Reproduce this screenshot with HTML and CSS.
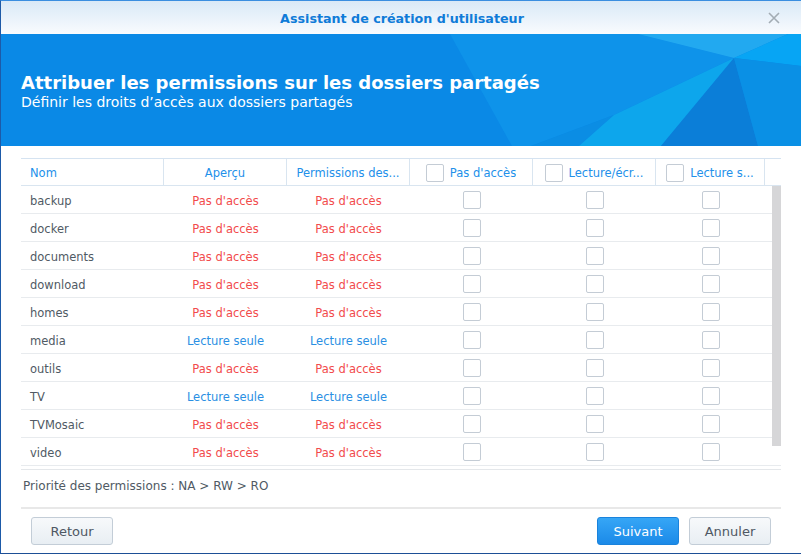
FILE: index.html
```html
<!DOCTYPE html>
<html lang="fr">
<head>
<meta charset="utf-8">
<title>Assistant de création d'utilisateur</title>
<link rel="stylesheet" href="styles.css">
</head>
<body>
<div class="window">
  <div class="titlebar">
    <span class="title">Assistant de création d'utilisateur</span>
    <span class="close" aria-label="Fermer">
      <svg width="12" height="12" viewBox="0 0 12 12"><path d="M1 1L11 11M11 1L1 11" stroke="#a3acb4" stroke-width="1.6" fill="none"/></svg>
    </span>
  </div>
  <div class="banner">
    <svg class="facets" viewBox="0 0 801 112" preserveAspectRatio="none">
      <polygon points="449,0 637,0 733,24 613,81 530,112 511,112" fill="#0e93ea"/>
      <polygon points="530,112 613,81 578,112" fill="#0b8de4"/>
      <polygon points="637,0 787,0 733,24" fill="#22a9f0"/>
      <polygon points="787,0 801,0 801,32 733,24" fill="#07a5f4"/>
      <polygon points="733,24 613,81 578,112 660,112" fill="#0da6ec"/>
      <polygon points="733,24 660,112 757,112" fill="#0b7ed8"/>
      <polygon points="733,24 801,32 801,112 757,112" fill="#0a90e5"/>
    </svg>
    <h1 class="banner-title">Attribuer les permissions sur les dossiers partagés</h1>
    <p class="banner-sub">Définir les droits d’accès aux dossiers partagés</p>
  </div>
  <div class="content">
    <div class="grid">
      <div class="ghead">
        <div class="hc c-name">Nom</div>
        <div class="hc c-mid center">Aperçu</div>
        <div class="hc c-mid center"><span class="ell">Permissions des...</span></div>
        <div class="hc c-mid center"><span class="cb"></span><span class="ell">Pas d'accès</span></div>
        <div class="hc c-mid center"><span class="cb"></span><span class="ell">Lecture/écr...</span></div>
        <div class="hc c-last center"><span class="cb"></span><span class="ell">Lecture s...</span></div>
        <div class="hc-spacer"></div>
      </div>
      <div class="gbody">
        <div class="row"><div class="c c-name">backup</div><div class="c c-mid na">Pas d'accès</div><div class="c c-mid na">Pas d'accès</div><div class="c c-mid"><span class="cb"></span></div><div class="c c-mid"><span class="cb"></span></div><div class="c c-last"><span class="cb"></span></div></div>
        <div class="row"><div class="c c-name">docker</div><div class="c c-mid na">Pas d'accès</div><div class="c c-mid na">Pas d'accès</div><div class="c c-mid"><span class="cb"></span></div><div class="c c-mid"><span class="cb"></span></div><div class="c c-last"><span class="cb"></span></div></div>
        <div class="row"><div class="c c-name">documents</div><div class="c c-mid na">Pas d'accès</div><div class="c c-mid na">Pas d'accès</div><div class="c c-mid"><span class="cb"></span></div><div class="c c-mid"><span class="cb"></span></div><div class="c c-last"><span class="cb"></span></div></div>
        <div class="row"><div class="c c-name">download</div><div class="c c-mid na">Pas d'accès</div><div class="c c-mid na">Pas d'accès</div><div class="c c-mid"><span class="cb"></span></div><div class="c c-mid"><span class="cb"></span></div><div class="c c-last"><span class="cb"></span></div></div>
        <div class="row"><div class="c c-name">homes</div><div class="c c-mid na">Pas d'accès</div><div class="c c-mid na">Pas d'accès</div><div class="c c-mid"><span class="cb"></span></div><div class="c c-mid"><span class="cb"></span></div><div class="c c-last"><span class="cb"></span></div></div>
        <div class="row"><div class="c c-name">media</div><div class="c c-mid ro">Lecture seule</div><div class="c c-mid ro">Lecture seule</div><div class="c c-mid"><span class="cb"></span></div><div class="c c-mid"><span class="cb"></span></div><div class="c c-last"><span class="cb"></span></div></div>
        <div class="row"><div class="c c-name">outils</div><div class="c c-mid na">Pas d'accès</div><div class="c c-mid na">Pas d'accès</div><div class="c c-mid"><span class="cb"></span></div><div class="c c-mid"><span class="cb"></span></div><div class="c c-last"><span class="cb"></span></div></div>
        <div class="row"><div class="c c-name">TV</div><div class="c c-mid ro">Lecture seule</div><div class="c c-mid ro">Lecture seule</div><div class="c c-mid"><span class="cb"></span></div><div class="c c-mid"><span class="cb"></span></div><div class="c c-last"><span class="cb"></span></div></div>
        <div class="row"><div class="c c-name">TVMosaic</div><div class="c c-mid na">Pas d'accès</div><div class="c c-mid na">Pas d'accès</div><div class="c c-mid"><span class="cb"></span></div><div class="c c-mid"><span class="cb"></span></div><div class="c c-last"><span class="cb"></span></div></div>
        <div class="row"><div class="c c-name">video</div><div class="c c-mid na">Pas d'accès</div><div class="c c-mid na">Pas d'accès</div><div class="c c-mid"><span class="cb"></span></div><div class="c c-mid"><span class="cb"></span></div><div class="c c-last"><span class="cb"></span></div></div>
        <div class="scrollbar"></div>
      </div>
    </div>
    <div class="note">Priorité des permissions : NA &gt; RW &gt; RO</div>
  </div>
  <div class="footer">
    <button class="btn">Retour</button>
    <div class="footer-right">
      <button class="btn btn-primary">Suivant</button>
      <button class="btn">Annuler</button>
    </div>
  </div>
</div>
</body>
</html>
```
FILE: styles.css
```css
* { box-sizing: border-box; }
html, body { margin: 0; padding: 0; background: #ffffff; }
body {
  font-family: "DejaVu Sans", Verdana, sans-serif;
  font-size: 11.5px;
  color: #505a64;
}
.window {
  width: 801px;
  height: 554px;
  border-left: 1px solid #1d5aa8;
  border-top: 1px solid #3a8ee0;
  border-bottom: 1px solid #1d4f96;
  display: flex;
  flex-direction: column;
  background: #ffffff;
  overflow: hidden;
}
.titlebar {
  height: 33px;
  flex: none;
  background: linear-gradient(#d9e9f7, #f9fbfe);
  display: flex;
  align-items: center;
  justify-content: center;
  position: relative;
}
.title {
  font-weight: bold;
  font-size: 12.7px;
  color: #0f7bd8;
  margin-left: 2px;
  padding-top: 1px;
}
.close {
  position: absolute;
  right: 21px;
  top: 11px;
  width: 12px;
  height: 12px;
  display: block;
}
.close svg { display: block; }
.banner {
  position: relative;
  height: 112px;
  flex: none;
  background: #0a89e6;
  padding: 38px 20px 0 20px;
  color: #ffffff;
  overflow: hidden;
}
.facets {
  position: absolute;
  left: 0; top: 0;
  width: 801px;
  height: 112px;
}
.banner-title {
  position: relative;
  margin: 0;
  font-size: 18px;
  line-height: 21px;
  font-weight: bold;
}
.banner-sub {
  position: relative;
  margin: 1px 0 0 0;
  font-size: 14px;
  line-height: 16px;
}
.content {
  flex: none;
  padding: 12px 19px 0 20px;
}
.grid {
  width: 760px;
}
.ghead {
  display: flex;
  height: 28px;
  border-top: 1px solid #d5e3f1;
  border-bottom: 1px solid #d9e5f0;
  color: #2290ea;
}
.hc {
  display: flex;
  align-items: center;
  padding-top: 1px;
  border-right: 1px solid #d9e5f0;
  white-space: nowrap;
  overflow: hidden;
}
.hc .cb { margin-right: 6px; flex: none; }
.hc-spacer { flex: 1; }
.c-name { width: 143px; padding-left: 9px; }
.c-mid { width: 123px; }
.c-last { width: 109px; }
.center { justify-content: center; }
.ell { overflow: hidden; }
.gbody {
  position: relative;
  height: 284px;
  border-bottom: 1px solid #e4e7ea;
  overflow: hidden;
}
.row {
  display: flex;
  height: 28px;
  border-bottom: 1px solid #e8ebee;
}
.c {
  display: flex;
  align-items: center;
  justify-content: center;
  white-space: nowrap;
  padding-top: 2px;
}
.c.c-name { justify-content: flex-start; }
.na { color: #f24b4b; }
.ro { color: #2a8fe3; }
.cb {
  display: inline-block;
  width: 18px;
  height: 18px;
  border: 1px solid #c4ccd5;
  border-radius: 2px;
  background: #ffffff;
}
.c .cb { margin-top: -2px; }
.scrollbar {
  position: absolute;
  left: 751px;
  top: 0;
  width: 9px;
  height: 260px;
  background: #d6d6d8;
}
.note {
  height: 37px;
  padding: 8px 0 0 2px;
  line-height: 16px;
  font-size: 12px;
}
.footer {
  flex: none;
  margin: 0 20px 0 20px;
  border-top: 2px solid #e8e8e8;
  padding: 8px 10px 0 10px;
  display: flex;
  justify-content: space-between;
}
.footer-right { display: flex; gap: 10px; }
.btn {
  width: 82px;
  height: 28px;
  font-family: "DejaVu Sans", Verdana, sans-serif;
  font-size: 13px;
  color: #4e5863;
  background: linear-gradient(#f7f9fb, #e8eef3);
  border: 1px solid #c3cdd7;
  border-radius: 3px;
  padding: 0;
}
.btn-primary {
  color: #ffffff;
  background: linear-gradient(#36a6f6, #1b8ae8);
  border-color: #1a83dc;
}
```
